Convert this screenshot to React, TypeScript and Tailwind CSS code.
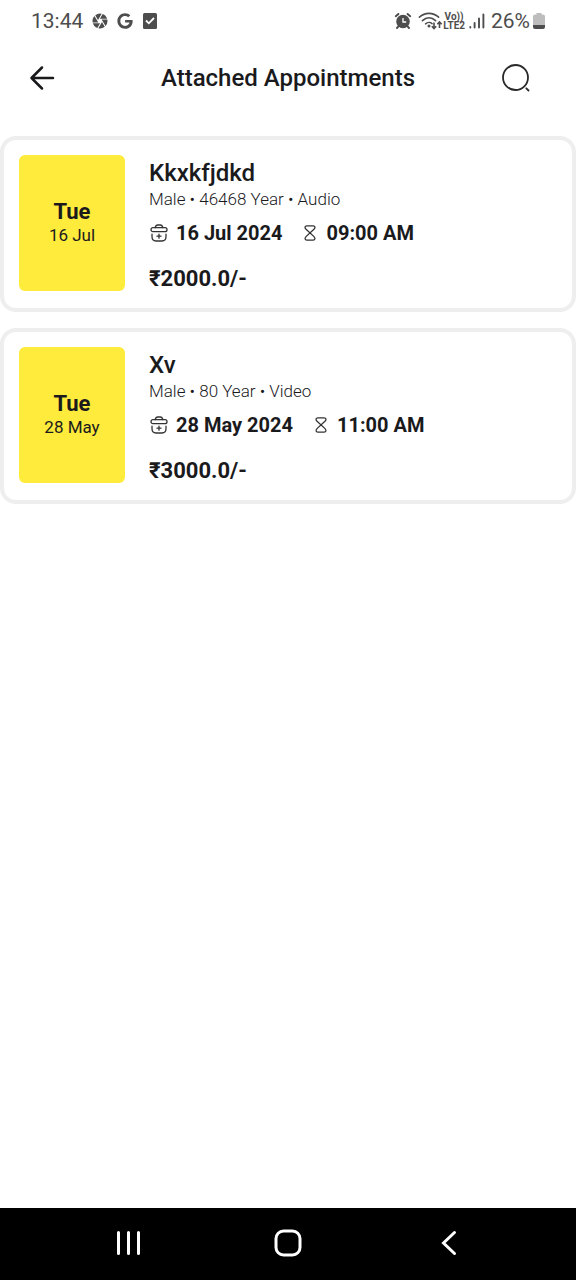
import React from "react";
import { FaGoogle } from "react-icons/fa";
import { MdCamera } from "react-icons/md";

const appointments = [
  {
    name: "Kkxkfjdkd",
    details: "Male • 46468 Year • Audio",
    weekday: "Tue",
    day: "16 Jul",
    date: "16 Jul 2024",
    time: "09:00 AM",
    price: "₹2000.0/-",
  },
  {
    name: "Xv",
    details: "Male • 80 Year • Video",
    weekday: "Tue",
    day: "28 May",
    date: "28 May 2024",
    time: "11:00 AM",
    price: "₹3000.0/-",
  },
];

function AlarmIcon() {
  return (
    <svg width="18" height="18" viewBox="0 0 18 18" aria-hidden="true">
      <circle cx="9" cy="9.5" r="6.8" fill="#4d4d4d" />
      <g stroke="#4d4d4d" strokeWidth="2" strokeLinecap="round">
        <path d="M1.8 4.2 4.4 2M16.2 4.2 13.6 2" />
        <path d="M4.6 14.2 3 16M13.4 14.2 15 16" />
      </g>
      <path d="M9 6v4h3.200" fill="none" stroke="#fff" strokeWidth="1.3" />
    </svg>
  );
}

function WifiIcon() {
  return (
    <svg width="25" height="18" viewBox="0 0 25 18" aria-hidden="true">
      <g fill="none" stroke="#4d4d4d" strokeWidth="1.6" strokeLinecap="round">
        <path d="M1.4 5.2C7 .1 15 .1 20.6 5.2" />
        <path d="M4.4 8.6c4-3.6 9.200-3.600 13.200 0" />
        <path d="M7.600 11.800c2-1.700 4.800-1.700 6.400-.2" />
      </g>
      <circle cx="11" cy="14" r="1.5" fill="#4d4d4d" />
      <g fill="none" stroke="#4d4d4d" strokeWidth="1.6">
        <path d="M16 10.500v6M13.800 14.200l2.200 2.300 2.200-2.300" />
        <path d="M21.500 16v-6M19.300 12.300l2.200-2.300 2.200 2.300" />
      </g>
    </svg>
  );
}

function SignalIcon() {
  return (
    <svg width="16" height="16" viewBox="0 0 16 16" aria-hidden="true">
      <g stroke="#4d4d4d" strokeWidth="1.900" strokeLinecap="round">
        <path d="M1.300 14v.5M5.600 10v4.500M10 5.500v9M14.400 1.500v13" />
      </g>
    </svg>
  );
}

function BatteryIcon() {
  return (
    <svg width="12" height="18" viewBox="0 0 12 18" aria-hidden="true">
      <path
        d="M3.500 1h5v1.500H10a2 2 0 0 1 2 2V13H0V4.500a2 2 0 0 1 2-2h1.500z"
        fill="#bdbdbd"
      />
      <path d="M0 13h12v2a2 2 0 0 1-2 2H2a2 2 0 0 1-2-2z" fill="#4d4d4d" />
    </svg>
  );
}

function CheckIcon() {
  return (
    <svg width="14" height="16" viewBox="0 0 14 16" aria-hidden="true">
      <rect width="14" height="16" rx="1.500" fill="#4d4d4d" />
      <path d="m3 7.500 2.800 2.800L11 5" fill="none" stroke="#fff" strokeWidth="1.800" />
    </svg>
  );
}

function BagIcon() {
  return (
    <svg width="18" height="18" viewBox="0 0 18 18" aria-hidden="true">
      <g fill="none" stroke="#333" strokeWidth="1.300" strokeLinecap="round">
        <path d="M5.200 3.600C5.600 1.800 6.500 1 7.700 1h2.600c1.200 0 2.100.8 2.500 2.600" />
        <rect x="1" y="3.700" width="16" height="4" rx="2" />
        <path d="M2 10.200v2.300C2 15.500 3.500 17 6 17h6c2.500 0 4-1.500 4-4.500v-2.300" />
        <path d="M9 10.200v4M7 12.200h4" />
      </g>
    </svg>
  );
}

function HourglassIcon() {
  return (
    <svg width="12" height="16" viewBox="0 0 12 16" aria-hidden="true">
      <path
        d="M2.800.8h6.400c2 0 2.300 1.900 1 3.200L2 11.600c-1.500 1.500-1.200 3.600.8 3.600h6.400c2 0 2.300-2.100.8-3.600L1.800 4C.5 2.700.8.8 2.800.8z"
        fill="none"
        stroke="#333"
        strokeWidth="1.300"
      />
    </svg>
  );
}

function StatusBar() {
  return (
    <div className="flex h-[42px] items-center justify-between px-[31px] text-[#4d4d4d]">
      <div className="flex items-center">
        <span className="text-[21px] leading-6">13:44</span>
        <MdCamera className="ml-2 size-[18px]" />
        <FaGoogle className="ml-2 size-4" />
        <span className="ml-2.5">
          <CheckIcon />
        </span>
      </div>
      <div className="flex items-center">
        <AlarmIcon />
        <span className="ml-1.5">
          <WifiIcon />
        </span>
        <div className="flex flex-col items-center text-[10px] font-bold leading-[9px]">
          <span>Vo))</span>
          <span>LTE2</span>
        </div>
        <span className="ml-1">
          <SignalIcon />
        </span>
        <span className="ml-1.5 text-[21px] leading-6">26%</span>
        <span className="ml-[3px]">
          <BatteryIcon />
        </span>
      </div>
    </div>
  );
}

function AppointmentCard({ item }: { item: (typeof appointments)[number] }) {
  return (
    <article className="flex gap-6 rounded-2xl border-4 border-[#eee] px-[15px] pt-[15px] pb-[17px]">
      <div className="flex h-[136px] w-[106px] shrink-0 flex-col items-center justify-center rounded-md bg-[#ffeb3b]">
        <span className="text-[22px] font-bold leading-6">{item.weekday}</span>
        <span className="text-[17px] leading-[22px]">{item.day}</span>
      </div>
      <div className="min-w-0">
        <h2 className="mt-1 text-2xl font-medium leading-7">{item.name}</h2>
        <p className="text-[17px] font-light leading-6">{item.details}</p>
        <div className="mt-2.5 flex items-center text-xl font-bold leading-6">
          <span className="ml-px">
            <BagIcon />
          </span>
          <span className="ml-2">{item.date}</span>
          <span className="ml-[22px]">
            <HourglassIcon />
          </span>
          <span className="ml-2.5">{item.time}</span>
        </div>
        <p className="mt-[22px] text-[22px] font-bold leading-6">{item.price}</p>
      </div>
    </article>
  );
}

function App() {
  return (
    <div className="flex min-h-screen flex-col bg-white font-[Roboto,sans-serif] text-[#1a1a1d]">
      <StatusBar />
      <header className="grid h-[72px] grid-cols-[1fr_auto_1fr] items-center pl-[29px] pr-[29px]">
        <button type="button" aria-label="Back" className="justify-self-start">
          <svg width="26" height="26" viewBox="0 0 26 26" aria-hidden="true">
            <path
              d="M24 13H2.500M13 2.500 2.500 13 13 23.500"
              fill="none"
              stroke="#1a1a1d"
              strokeWidth="2.500"
              strokeLinecap="round"
              strokeLinejoin="round"
            />
          </svg>
        </button>
        <h1 className="text-2xl font-medium">Attached Appointments</h1>
        <button type="button" aria-label="Search" className="mr-4 justify-self-end">
          <svg width="30" height="30" viewBox="0 0 30 30" aria-hidden="true">
            <g fill="none" stroke="#292929" strokeWidth="1.800" strokeLinecap="round">
              <circle cx="14.500" cy="14.500" r="12.500" />
              <path d="m25.300 25.300 2.200 2.200" />
            </g>
          </svg>
        </button>
      </header>
      <main className="mt-[22px] flex flex-1 flex-col gap-4">
        {appointments.map((item) => (
          <AppointmentCard key={item.name} item={item} />
        ))}
      </main>
      <nav className="flex h-[72px] items-center justify-around bg-black px-[46px] pb-0.5">
        <button type="button" aria-label="Recent apps">
          <svg width="28" height="28" viewBox="0 0 28 28" aria-hidden="true">
            <path
              d="M5.500 3.500v21M15.500 3.500v21M25.500 3.500v21"
              stroke="#fff"
              strokeWidth="3"
              strokeLinecap="round"
            />
          </svg>
        </button>
        <button type="button" aria-label="Home">
          <svg width="28" height="28" viewBox="0 0 28 28" aria-hidden="true">
            <rect
              x="2"
              y="2"
              width="24"
              height="24"
              rx="7.500"
              fill="none"
              stroke="#fff"
              strokeWidth="3"
            />
          </svg>
        </button>
        <button type="button" aria-label="Go back">
          <svg width="28" height="28" viewBox="0 0 28 28" aria-hidden="true">
            <path
              d="M19.500 3.500 8.500 14l11 10.500"
              fill="none"
              stroke="#fff"
              strokeWidth="3"
              strokeLinecap="round"
            />
          </svg>
        </button>
      </nav>
    </div>
  );
}

export default App;
